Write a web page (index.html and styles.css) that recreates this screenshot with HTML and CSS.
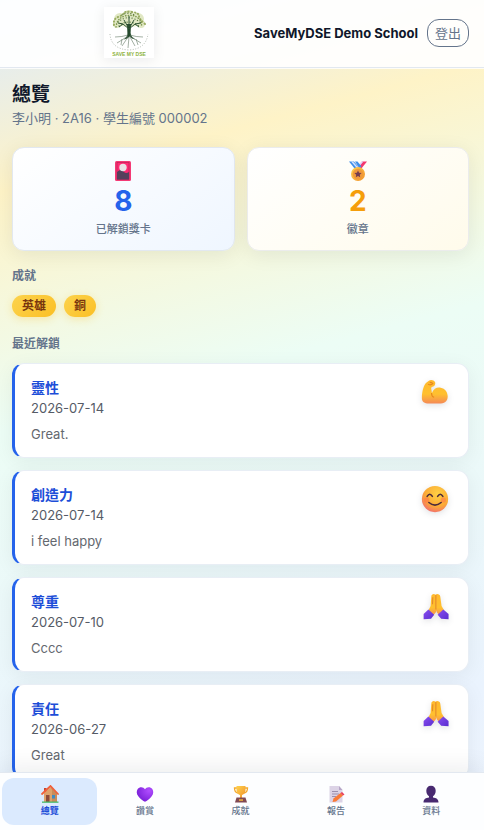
FILE: index.html
```html
<!DOCTYPE html>
<html lang="zh-Hant">
<head>
    <meta charset="UTF-8">
    <meta name="viewport" content="width=device-width, initial-scale=1.0">
    <title>總覽</title>
    <link rel="stylesheet" href="styles.css">
</head>
<body>
    <!-- shared icons -->
    <svg class="sprite" aria-hidden="true">
        <defs>
            <linearGradient id="skin" x1="0" y1="0" x2="0" y2="1">
                <stop offset="0" stop-color="#ffb92e"/>
                <stop offset="0.6" stop-color="#ffc02f"/>
                <stop offset="1" stop-color="#f58a55"/>
            </linearGradient>
            <linearGradient id="sleeve" x1="0" y1="0" x2="1" y2="1">
                <stop offset="0" stop-color="#8a4df0"/>
                <stop offset="1" stop-color="#5a2fd0"/>
            </linearGradient>
            <linearGradient id="gold" x1="0" y1="0" x2="1" y2="1">
                <stop offset="0" stop-color="#ffd34d"/>
                <stop offset="1" stop-color="#f0902a"/>
            </linearGradient>
            <radialGradient id="face" cx="0.6" cy="0.3" r="0.8">
                <stop offset="0" stop-color="#ffd144"/>
                <stop offset="0.6" stop-color="#fbaa36"/>
                <stop offset="1" stop-color="#f0607a"/>
            </radialGradient>
            <radialGradient id="heart" cx="0.75" cy="0.25" r="0.8">
                <stop offset="0" stop-color="#b04dff"/>
                <stop offset="1" stop-color="#7a20d8"/>
            </radialGradient>
        </defs>
        <symbol id="icon-pray" viewBox="0 0 32 32">
            <path d="M16.500 3c-2-1.500-4.500-.5-4.700 2L11 16l-3 6 5 6 4-5 .5-2 .5 2 4 5 5-6-3.500-6-1.500-11c-.4-2.500-3.500-3.500-5.500-2z" fill="url(#skin)"/>
            <path d="M17 3.500V20M13.500 6l-.3 8" stroke="#dd7d2c" stroke-width="1" fill="none"/>
            <path d="M8.500 20L15 26l-3.500 4.500L3 31v-6z" fill="url(#sleeve)"/>
            <path d="M25.500 20L19 26l4 4.500 8.500 .5v-6z" fill="url(#sleeve)"/>
        </symbol>
    </svg>

    <div class="app">
        <header class="topbar">
            <div class="brand">
                <svg class="logo" viewBox="0 0 50 51" role="img" aria-label="Save My DSE">
                    <rect width="50" height="51" fill="#fff"/>
                    <!-- leaves -->
                    <g fill="#e1e8c4">
                        <circle cx="16" cy="12" r="6"/>
                        <circle cx="25" cy="9" r="6"/>
                        <circle cx="34" cy="12" r="6"/>
                        <circle cx="13" cy="17" r="4"/>
                        <circle cx="37" cy="17" r="4"/>
                        <ellipse cx="25" cy="15" rx="13" ry="5"/>
                    </g>
                    <g fill="none" stroke-linecap="round">
                        <path d="M10 18q-1-6 4-8t6-4 8-1 7 4 6 8" stroke="#9bad62" stroke-width="2" stroke-dasharray="0.500 2.600"/>
                        <path d="M12 20q1-9 9-11t13 2 3 9" stroke="#7f9850" stroke-width="1.500" stroke-dasharray="0.300 2.300"/>
                        <path d="M14 15q11-9 23 1M18 8q7-4 14 1M15 19q9-8 20 0" stroke="#5f7d43" stroke-width="1.200" stroke-dasharray="0.300 2.700"/>
                    </g>
                    <!-- trunk and branches -->
                    <path d="M23 17h4l-.4 9c.3 3 2 5 5 6.500-3-.5-4.500-1.500-6-3-1.500 1.500-3 2.500-6 3 3-2 4-4 3.800-6.500z" fill="#24492c"/>
                    <path d="M25 22l-6-5-5-1M24 20l-4-7M25 20V9M26 20l4-7M25 22l6-5 6-1M19 17l-4 3M31 17l4 3" fill="none" stroke="#2f5434" stroke-width="1"/>
                    <path d="M24 28q-6 2-13 2M24 29q-6 4-11 7M24 30l-6 9M25 30l-1 11M26 30l5 9M26 29q6 4 11 7M26 28q6 2 13 2M18 32l-1 6M32 32l2 6" fill="none" stroke="#647a66" stroke-width="0.600"/>
                    <path d="M6 27q1 15 19 16 17-1 19-16" fill="none" stroke="#a7b0a6" stroke-width="0.900" stroke-dasharray="1 1.600"/>
                    <text x="25" y="48.500" text-anchor="middle" class="logo-text">SAVE MY DSE</text>
                </svg>
            </div>
            <span class="school">SaveMyDSE Demo School</span>
            <button class="logout" type="button">登出</button>
        </header>

        <main class="content">
            <h1>總覽</h1>
            <p class="student">李小明 · 2A16 · 學生編號 000002</p>

            <div class="stats">
                <div class="stat stat-cards">
                    <svg class="stat-icon" viewBox="0 0 20 20" aria-hidden="true">
                        <rect x="2" width="16" height="20" rx="1.500" fill="#f43a75"/>
                        <rect x="4" y="1.500" width="12" height="17" fill="#ff2b74" stroke="#b51d56" stroke-width="0.600"/>
                        <path d="M4 11q4-4 7 0 2 2 5 0v7.500H4z" fill="#56405c"/>
                        <circle cx="10" cy="6.500" r="3.700" fill="#e9e3e6"/>
                    </svg>
                    <strong class="stat-value">8</strong>
                    <span class="stat-label">已解鎖獎卡</span>
                </div>
                <div class="stat stat-badges">
                    <svg class="stat-icon" viewBox="0 0 20 20" aria-hidden="true">
                        <path d="M1 0.500h5l6 7-3 3z" fill="#3f8ee8"/>
                        <path d="M3 0.500h2l6 7-1 1z" fill="#d7e3ff"/>
                        <path d="M19 0.500h-5l-6 7 3 3z" fill="#f4376d"/>
                        <path d="M15.500 0.500h-2l-5 6 1 1z" fill="#e0d5fb"/>
                        <path d="M7 0.500h2.500l4 5-2 2z" fill="#3f8ee8"/>
                        <circle cx="10" cy="13" r="7" fill="url(#gold)"/>
                        <circle cx="10" cy="13" r="5.300" fill="#f09a3b"/>
                        <path d="M10 9.400l1.100 2.300 2.500.3-1.800 1.700.4 2.500-2.200-1.200-2.200 1.200.4-2.500L6.400 12l2.500-.3z" fill="#733d4f"/>
                    </svg>
                    <strong class="stat-value">2</strong>
                    <span class="stat-label">徽章</span>
                </div>
            </div>

            <h2>成就</h2>
            <div class="chips">
                <span class="chip">英雄</span>
                <span class="chip">銅</span>
            </div>

            <h2>最近解鎖</h2>
            <ul class="unlocks">
                <li class="unlock">
                    <div>
                        <h3>靈性</h3>
                        <time datetime="2026-07-14">2026-07-14</time>
                        <p>Great.</p>
                    </div>
                    <svg class="unlock-icon" viewBox="0 0 32 32" aria-hidden="true">
                        <path d="M9 3c2-1.500 6-.8 7 1.500 1 2.500-.5 5-3 5.500l-1.500 1 1 6c2-5 6-7 10-6 5 1 8 5 8 10 0 6-4 8-10 8H9c-5 0-8-2-8-6C1 16 3 8 6 5.500 7 4.500 8 3.500 9 3z" fill="url(#skin)"/>
                        <path d="M8 7q3 2 6-1M10 5l3 .5M12 17q0 4 3 5" fill="none" stroke="#e8871e" stroke-width="1.300"/>
                    </svg>
                </li>
                <li class="unlock">
                    <div>
                        <h3>創造力</h3>
                        <time datetime="2026-07-14">2026-07-14</time>
                        <p>i feel happy</p>
                    </div>
                    <svg class="unlock-icon" viewBox="0 0 32 32" aria-hidden="true">
                        <circle cx="16" cy="16" r="15" fill="url(#face)"/>
                        <circle cx="6.500" cy="17" r="3" fill="#ff6b4e" opacity="0.500"/>
                        <circle cx="25.500" cy="17" r="3" fill="#ff6b4e" opacity="0.500"/>
                        <path d="M7 13q3-5 6 0M19 13q3-5 6 0M9 20q7 6 14 0" fill="none" stroke="#4b2a3c" stroke-width="1.800" stroke-linecap="round"/>
                    </svg>
                </li>
                <li class="unlock">
                    <div>
                        <h3>尊重</h3>
                        <time datetime="2026-07-10">2026-07-10</time>
                        <p>Cccc</p>
                    </div>
                    <svg class="unlock-icon" aria-hidden="true"><use href="#icon-pray"/></svg>
                </li>
                <li class="unlock">
                    <div>
                        <h3>責任</h3>
                        <time datetime="2026-06-27">2026-06-27</time>
                        <p>Great</p>
                    </div>
                    <svg class="unlock-icon" aria-hidden="true"><use href="#icon-pray"/></svg>
                </li>
            </ul>
        </main>

        <nav class="tabs">
            <a class="tab active" href="#home">
                <svg viewBox="0 0 18 18" aria-hidden="true">
                    <path d="M3 3h2.500v4H3z" fill="#c7452f"/>
                    <path d="M3 8l7-6 6 6v9H3z" fill="#dda26c"/>
                    <path d="M10 2l6 6v9h-5V5z" fill="#c98c59"/>
                    <path d="M1 9l8.500-8L17 9" fill="none" stroke="#f0603b" stroke-width="1.800" stroke-linecap="round"/>
                    <path d="M5 10h3.500v7H5z" fill="#8b4a3b"/>
                    <path d="M11 10h3v3.500h-3z" fill="#3d8bc5"/>
                    <path d="M1 16.500h16.500v1.300H1z" fill="#42b868"/>
                </svg>
                <span>總覽</span>
            </a>
            <a class="tab" href="#praise">
                <svg viewBox="0 0 18 18" aria-hidden="true">
                    <path d="M9 4.300C7.500 1.500 3.500 1.500 1.700 4 .3 6 .4 9 2.300 11.300 4.500 14 7 16 9 16.700c2-.7 4.500-2.700 6.700-5.400C17.600 9 17.700 6 16.300 4c-1.800-2.500-5.800-2.500-7.300.3z" fill="url(#heart)"/>
                </svg>
                <span>讚賞</span>
            </a>
            <a class="tab" href="#achievements">
                <svg viewBox="0 0 18 18" aria-hidden="true">
                    <path d="M5 3H2.500q0 4.500 3.500 5M13 3h2.500q0 4.500-3.500 5" fill="none" stroke="#f3a92c" stroke-width="1.300"/>
                    <path d="M4.500 1h9v4.500c0 2.500-2 4-3.500 4.500v3H8v-3C6.500 9.500 4.500 8 4.500 5.500z" fill="url(#gold)"/>
                    <path d="M4.500 12.500h9l1.500 5H3z" fill="#814a52"/>
                    <path d="M7 14.300h4v1.500H7z" fill="#f3b73c"/>
                </svg>
                <span>成就</span>
            </a>
            <a class="tab" href="#reports">
                <svg viewBox="0 0 18 18" aria-hidden="true">
                    <path d="M2.500 1H12l3.500 4v12.500h-13z" fill="#dcd3e6"/>
                    <path d="M12 1v4h3.500z" fill="#b6a6c7"/>
                    <path d="M5 6.500h6M5 9h7M5 11.500h4" stroke="#9b8fae" stroke-width="1"/>
                    <path d="M5.500 17l1-3.500 7-5.500 2.500 2.500-7 6z" fill="#f97a37"/>
                    <path d="M13.500 8l1.500-1 2.500 2.500-1.500 1z" fill="#e83d5b"/>
                </svg>
                <span>報告</span>
            </a>
            <a class="tab" href="#profile">
                <svg viewBox="0 0 18 18" aria-hidden="true">
                    <path d="M9 .7c-3 0-4.700 2-4.700 5 0 2.500 1 4.500 2.700 5.500v1.300c-3 .3-5.500 1.500-5.500 5h15c0-3.500-2.500-4.700-5.500-5v-1.300c1.700-1 2.700-3 2.700-5.500 0-3-1.700-5-4.700-5z" fill="#482a70"/>
                </svg>
                <span>資料</span>
            </a>
        </nav>
    </div>
</body>
</html>
```

FILE: styles.css
```css
* {
    box-sizing: border-box;
}
body {
    margin: 0;
    font-family: Inter, "Noto Sans CJK TC", sans-serif;
    font-size: 13px;
    line-height: 20px;
    color: #64748b;
    background: linear-gradient(165deg, #dbeafe 0%, #fef3c7 20%, #ecfdf5 45%, #eaf3fe 85%, #eff6ff 100%);
}
h1, h2, h3, p, ul {
    margin: 0;
    padding: 0;
}
.sprite {
    position: absolute;
    width: 0;
    height: 0;
}
.app {
    display: flex;
    flex-direction: column;
    height: 100vh;
}

/* top bar */
.topbar {
    display: flex;
    align-items: center;
    gap: 9px;
    padding: 7px 15px 9px 12px;
    background: rgba(255, 255, 255, 0.92);
    border-bottom: 1px solid #e2e8f0;
    box-shadow: 0 1px 0 rgba(255, 255, 255, 0.8);
}
.brand {
    flex: 1;
    display: flex;
    justify-content: center;
}
.logo {
    width: 50px;
    height: 51px;
    box-shadow: 0 2px 12px rgba(15, 23, 42, 0.08);
}
.logo-text {
    font: bold 5px "Liberation Sans", sans-serif;
    fill: #8eb33e;
}
.school {
    font-size: 13px;
    font-weight: 700;
    color: #0f172a;
}
.logout {
    padding: 3px 7px;
    font: inherit;
    color: #64748b;
    background: transparent;
    border: 1px solid #64748b;
    border-radius: 12px;
    cursor: pointer;
}

/* content */
.content {
    flex: 1;
    min-height: 0;
    overflow-y: auto;
    scrollbar-width: none;
    padding: 13px 15px 12px 12px;
}
h1 {
    font-size: 19px;
    line-height: 27px;
    font-weight: 700;
    color: #0f172a;
}
.stats {
    display: grid;
    grid-template-columns: 1fr 1fr;
    gap: 12px;
    margin: 19px 0 17px;
}
.stat {
    display: flex;
    flex-direction: column;
    align-items: center;
    padding: 13px;
    border: 1px solid #e2e8f0;
    border-radius: 12px;
    box-shadow: 0 4px 20px rgba(15, 23, 42, 0.08);
}
.stat-cards {
    background: linear-gradient(145deg, #fff, #eff6ff);
}
.stat-badges {
    background: linear-gradient(145deg, #fff, #fffbeb);
    border-color: #ebecec;
}
.stat-icon {
    width: 20px;
    height: 20px;
}
.stat-value {
    font-size: 28px;
    line-height: 40px;
    font-weight: 700;
    color: #2563eb;
}
.stat-badges .stat-value {
    color: #f59e0b;
}
.stat-label {
    font-size: 11px;
    line-height: 16px;
    font-weight: 500;
}
h2 {
    margin-bottom: 11px;
    font-size: 12px;
    line-height: 16px;
    font-weight: 700;
}
.chips {
    display: flex;
    gap: 8px;
    margin-bottom: 19px;
}
.chip {
    padding: 0 10px;
    font-size: 12px;
    line-height: 22px;
    font-weight: 600;
    color: #78350f;
    background: linear-gradient(135deg, #fcd34d, #fbbf24);
    border-radius: 11px;
    box-shadow: 0 2px 8px rgba(251, 191, 36, 0.3);
}
.unlocks {
    display: flex;
    flex-direction: column;
    gap: 12px;
    list-style: none;
}
.unlock {
    display: flex;
    justify-content: space-between;
    align-items: flex-start;
    padding: 14px 19px 13px 16px;
    background: #fff;
    border: 1px solid #e8eef5;
    border-left: 3px solid #2563eb;
    border-radius: 12px;
    box-shadow: 0 4px 20px rgba(15, 23, 42, 0.06);
}
h3 {
    font-size: 14px;
    line-height: 20px;
    font-weight: 700;
    color: #1d4ed8;
}
.unlock time {
    display: block;
    color: #555b66;
}
.unlock p {
    margin-top: 6px;
    color: #64686f;
}
.unlock-icon {
    width: 28px;
    height: 28px;
    filter: drop-shadow(0 2px 3px rgba(15, 23, 42, 0.12));
}

/* bottom tabs */
.tabs {
    position: relative;
    display: flex;
    padding: 5px 5px 5px 2px;
    background: #fdfeff;
    border-top: 1px solid #e2e8f0;
    box-shadow: 0 -4px 24px rgba(15, 23, 42, 0.08);
}
.tab {
    flex: 1;
    display: flex;
    flex-direction: column;
    align-items: center;
    gap: 1px;
    padding: 7px 0;
    font-size: 9px;
    line-height: 14px;
    font-weight: 500;
    color: #64748b;
    text-decoration: none;
    border-radius: 12px;
}
.tab svg {
    width: 18px;
    height: 18px;
}
.tab.active {
    font-weight: 700;
    color: #1d4ed8;
    background: #dbeafe;
}
```
